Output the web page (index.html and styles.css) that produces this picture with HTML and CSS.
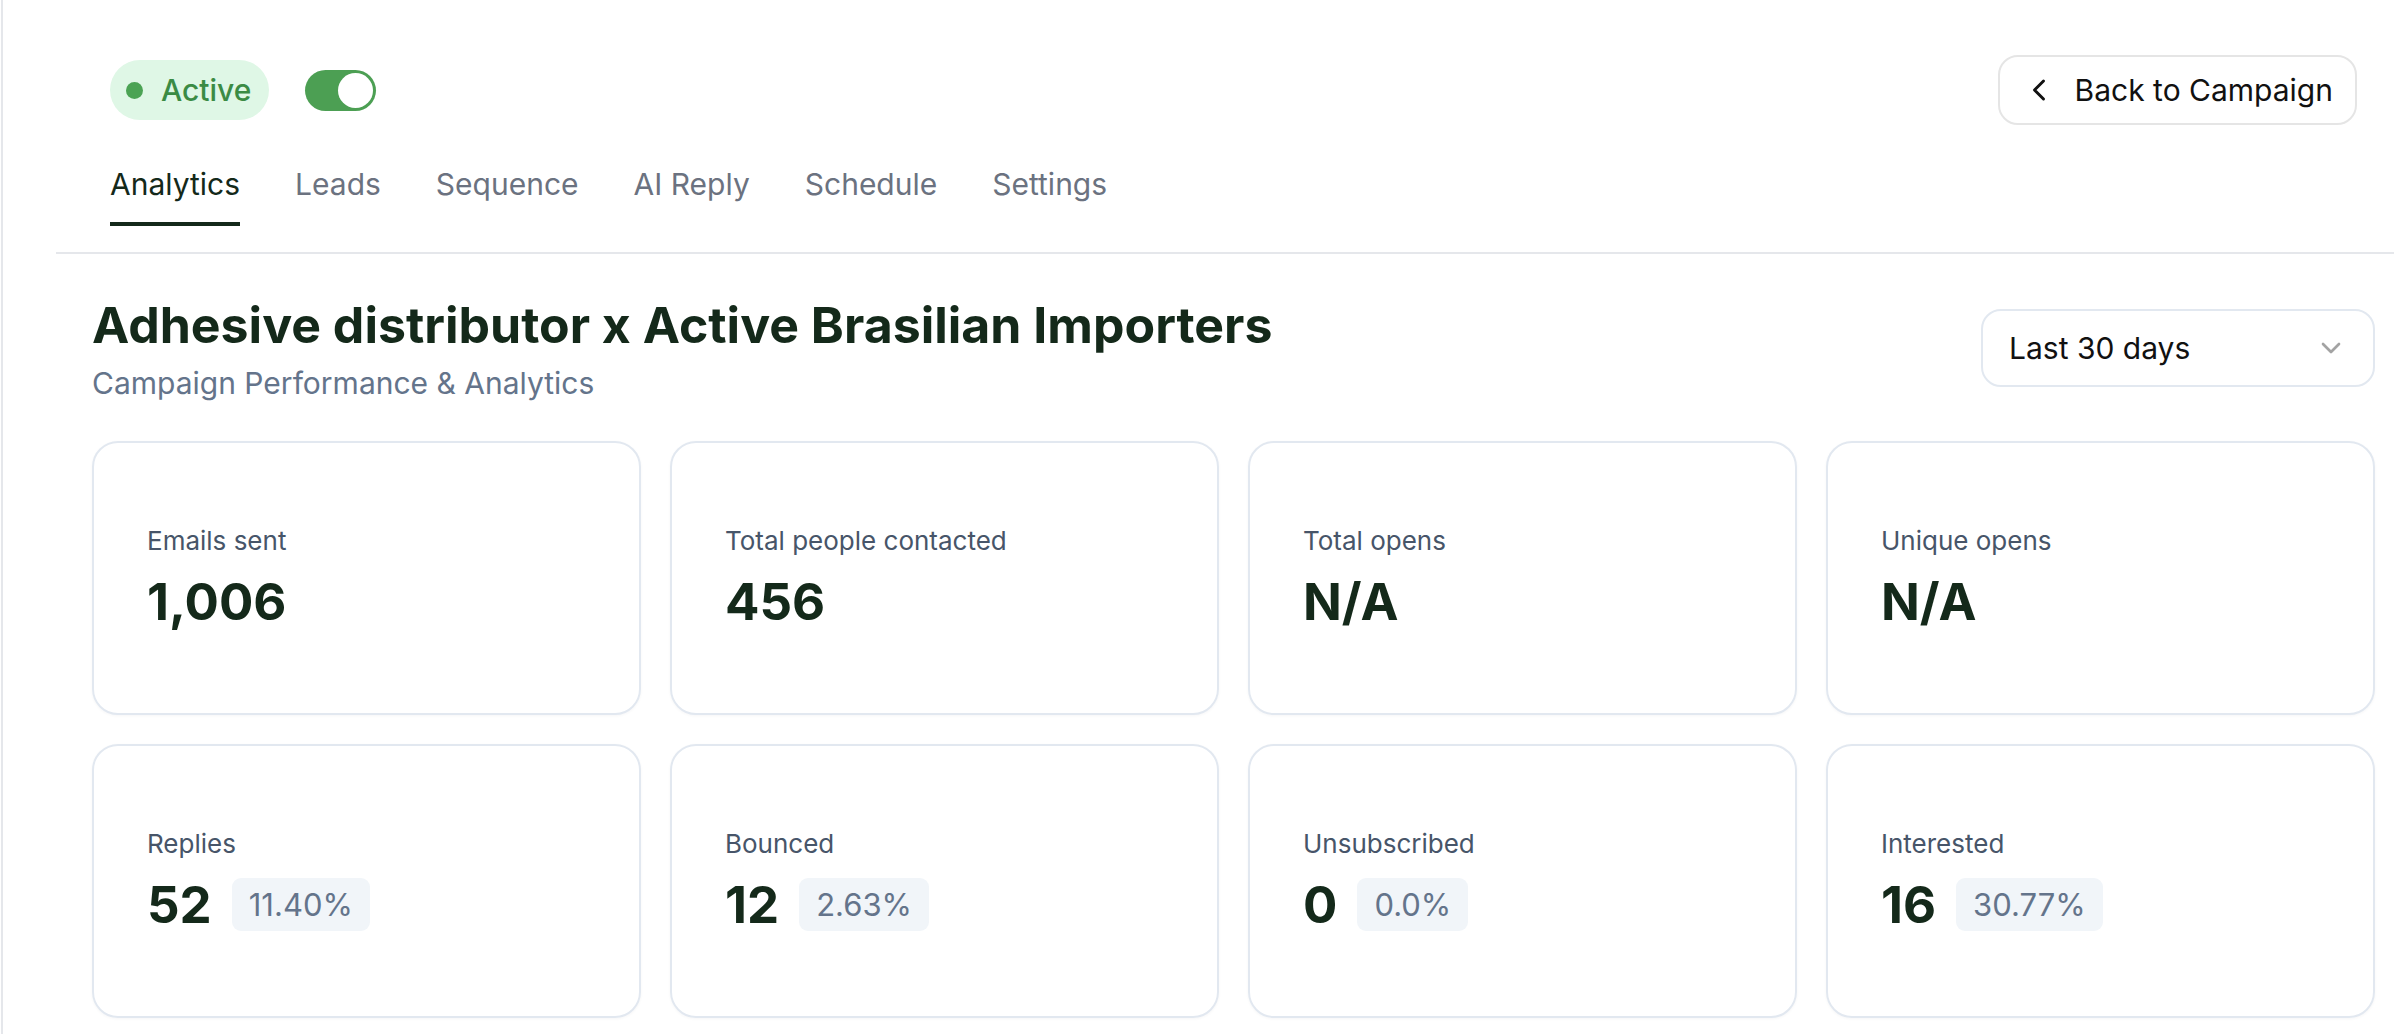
FILE: index.html
```html
<!DOCTYPE html>
<html>

<head>
    <title>Campaign Analytics</title>
    <meta name="viewport" content="width=device-width, initial-scale=1.0">
    <link rel="stylesheet" href="styles.css">
</head>

<body>
    <div class="page">
        <header class="campaign-header">
            <div class="header-top">
                <div class="status">
                    <span class="status-pill"><span class="status-dot"></span>Active</span>
                    <span class="toggle"><span class="toggle-knob"></span></span>
                </div>
                <button class="back-btn">
                    <svg viewBox="0 0 24 24" width="36" height="36" fill="none" stroke="currentColor" stroke-width="2" stroke-linecap="round" stroke-linejoin="round"><path d="m15 18-6-6 6-6"/></svg>
                    Back to Campaign
                </button>
            </div>
            <nav class="tabs">
                <a class="tab active">Analytics</a>
                <a class="tab">Leads</a>
                <a class="tab">Sequence</a>
                <a class="tab">AI Reply</a>
                <a class="tab">Schedule</a>
                <a class="tab">Settings</a>
            </nav>
        </header>

        <main class="analytics">
            <div class="title-row">
                <div>
                    <h1>Adhesive distributor x Active Brasilian Importers</h1>
                    <p class="subtitle">Campaign Performance &amp; Analytics</p>
                </div>
                <div class="range-select">
                    <span>Last 30 days</span>
                    <svg viewBox="0 0 24 24" width="32" height="32" fill="none" stroke="currentColor" stroke-width="2" stroke-linecap="round" stroke-linejoin="round"><path d="m6 9 6 6 6-6"/></svg>
                </div>
            </div>

            <div class="stats-grid">
                <div class="stat-card">
                    <div class="stat-label">Emails sent</div>
                    <div class="stat-row"><span class="stat-value">1,006</span></div>
                </div>
                <div class="stat-card">
                    <div class="stat-label">Total people contacted</div>
                    <div class="stat-row"><span class="stat-value">456</span></div>
                </div>
                <div class="stat-card">
                    <div class="stat-label">Total opens</div>
                    <div class="stat-row"><span class="stat-value">N/A</span></div>
                </div>
                <div class="stat-card">
                    <div class="stat-label">Unique opens</div>
                    <div class="stat-row"><span class="stat-value">N/A</span></div>
                </div>

                <div class="stat-card">
                    <div class="stat-label">Replies</div>
                    <div class="stat-row"><span class="stat-value">52</span><span class="stat-pct">11.40%</span></div>
                </div>
                <div class="stat-card">
                    <div class="stat-label">Bounced</div>
                    <div class="stat-row"><span class="stat-value">12</span><span class="stat-pct">2.63%</span></div>
                </div>
                <div class="stat-card">
                    <div class="stat-label">Unsubscribed</div>
                    <div class="stat-row"><span class="stat-value">0</span><span class="stat-pct">0.0%</span></div>
                </div>
                <div class="stat-card">
                    <div class="stat-label">Interested</div>
                    <div class="stat-row"><span class="stat-value">16</span><span class="stat-pct">30.77%</span></div>
                </div>
            </div>
        </main>
    </div>
</body>

</html>
```

FILE: styles.css
```css
body {
    font-family: Inter, "Noto Sans", sans-serif;
    background-color: #fff;
    margin: 0;
    padding: 0;
    overflow: hidden;
}

.page {
    margin-left: 1px;
    border-left: 2px solid #e5e7eb;
    min-height: 100vh;
}

/* Header with status, back button and tabs */
.campaign-header {
    margin-left: 53px;
    padding: 55px 37px 26px 54px;
    border-bottom: 2px solid #e5e7eb;
}

.header-top {
    display: flex;
    justify-content: space-between;
    align-items: center;
}

.status {
    display: flex;
    align-items: center;
    gap: 36px;
}

.status-pill {
    display: flex;
    align-items: center;
    gap: 18px;
    height: 60px;
    padding: 0 18px 0 16px;
    border-radius: 30px;
    background-color: #dff7e6;
    color: #3b8b44;
    font-size: 30px;
    font-weight: 500;
    box-sizing: border-box;
}

.status-dot {
    width: 17px;
    height: 17px;
    border-radius: 50%;
    background-color: #4ba354;
}

.toggle {
    display: flex;
    justify-content: flex-end;
    align-items: center;
    width: 71px;
    height: 41px;
    padding: 0 3px;
    box-sizing: border-box;
    border-radius: 21px;
    background-color: #4c9f53;
}

.toggle-knob {
    width: 35px;
    height: 35px;
    border-radius: 50%;
    background-color: #fff;
}

.back-btn {
    display: flex;
    align-items: center;
    gap: 18px;
    height: 70px;
    padding: 0 22px 0 21px;
    border: 2px solid #e5e5e5;
    border-radius: 20px;
    background-color: #fff;
    color: #111;
    font-family: inherit;
    font-size: 30px;
}

.tabs {
    display: flex;
    gap: 55px;
    margin-top: 41px;
}

.tab {
    padding-bottom: 20px;
    border-bottom: 4px solid transparent;
    color: #6b7280;
    font-size: 30px;
    line-height: 36px;
}

.tab.active {
    color: #14291a;
    border-bottom-color: #14291a;
}

/* Analytics content */
.analytics {
    padding: 42px 19px 0 89px;
}

.title-row {
    display: flex;
    justify-content: space-between;
    align-items: center;
}

h1 {
    margin: 0;
    color: #14291a;
    font-size: 50px;
    line-height: 58px;
    font-weight: 700;
}

.subtitle {
    margin: 12px 0 0;
    color: #64748b;
    font-size: 30px;
    line-height: 34px;
}

.range-select {
    display: flex;
    justify-content: space-between;
    align-items: center;
    width: 394px;
    height: 78px;
    padding: 0 26px 0 26px;
    box-sizing: border-box;
    border: 2px solid #e2e8f0;
    border-radius: 20px;
    color: #111;
    font-size: 30px;
}

.range-select svg {
    color: #a3a3a3;
}

.stats-grid {
    display: grid;
    grid-template-columns: repeat(4, 1fr);
    column-gap: 29px;
    row-gap: 29px;
    margin-top: 41px;
}

.stat-card {
    display: flex;
    flex-direction: column;
    justify-content: center;
    height: 274px;
    padding: 0 53px;
    box-sizing: border-box;
    border: 2px solid #e2e8f0;
    border-radius: 26px;
    box-shadow: 0 1px 3px rgba(15, 23, 42, 0.04);
}

.stat-label {
    color: #475569;
    font-size: 26px;
    line-height: 32px;
}

.stat-row {
    display: flex;
    align-items: center;
    gap: 20px;
    margin-top: 15px;
}

.stat-value {
    color: #14291a;
    font-size: 51px;
    line-height: 60px;
    font-weight: 700;
}

.stat-pct {
    padding: 8px 17px;
    border-radius: 9px;
    background-color: #f1f5f9;
    color: #64748b;
    font-size: 31px;
    line-height: 37px;
}
```
